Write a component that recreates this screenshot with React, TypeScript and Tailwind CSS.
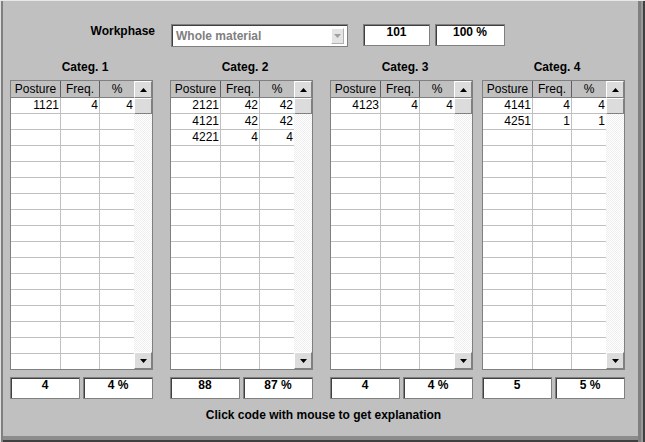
import React from 'react';

type Row = [number, number, number];

const categories: { title: string; rows: Row[]; total: number; pct: string; ml: string }[] = [
  { title: 'Categ. 1', rows: [[1121, 4, 4]], total: 4, pct: '4 %', ml: 'ml-[7px]' },
  {
    title: 'Categ. 2',
    rows: [
      [2121, 42, 42],
      [4121, 42, 42],
      [4221, 4, 4]
    ],
    total: 88,
    pct: '87 %',
    ml: 'ml-[17px]'
  },
  { title: 'Categ. 3', rows: [[4123, 4, 4]], total: 4, pct: '4 %', ml: 'ml-[17px]' },
  {
    title: 'Categ. 4',
    rows: [
      [4141, 4, 4],
      [4251, 1, 1]
    ],
    total: 5,
    pct: '5 %',
    ml: 'ml-[9px]'
  }
];

const ROW_COUNT = 17;

const Arrow = ({ up, color = '#000' }: { up?: boolean; color?: string }) => (
  <svg width="7" height="4" viewBox="0 0 7 4">
    {up ? <polygon points="3.5,0 7,4 0,4" fill={color} /> : <polygon points="0,0 7,0 3.5,4" fill={color} />}
  </svg>
);

const ScrollButton = ({ up }: { up?: boolean }) => (
  <div className="h-[17px] w-full bg-[#dcdcdc] border border-t-white border-l-white border-r-[#808080] border-b-[#808080] flex items-center justify-center">
    <Arrow up={up} />
  </div>
);

const PostureTable = ({ rows }: { rows: Row[] }) => {
  const lines = Array.from({ length: ROW_COUNT }, (_, i) => rows[i]);
  return (
    <div className="w-[143px] h-[290px] border border-[#808080] flex overflow-hidden bg-white">
      {/* grid */}
      <div className="w-[123px] flex flex-col">
        <div className="flex h-[17px] shrink-0 bg-[#c0c0c0] border-b border-[#808080] leading-[16px]">
          <div className="w-[50px] border-r border-[#606060] text-center">Posture</div>
          <div className="w-[39px] border-r border-[#606060] text-center">Freq.</div>
          <div className="w-[34px] text-center">%</div>
        </div>
        {lines.map((r, i) => (
          <div key={i} className="flex h-[16px] shrink-0 border-b border-[#c0c0c0] leading-[15px]">
            <div className="w-[50px] border-r border-[#c0c0c0] text-right pr-[1px]">{r ? r[0] : ''}</div>
            <div className="w-[39px] border-r border-[#c0c0c0] text-right pr-[1px]">{r ? r[1] : ''}</div>
            <div className="w-[34px] text-right pr-[1px]">{r ? r[2] : ''}</div>
          </div>
        ))}
      </div>
      {/* scrollbar */}
      <div className="w-[18px] flex flex-col">
        <ScrollButton up />
        <div className="h-[16px] bg-[#dcdcdc] border border-t-white border-l-white border-r-[#808080] border-b-[#808080]" />
        <div className="flex-1 bg-[repeating-conic-gradient(#ffffff_0_25%,#eeeeee_0_50%)] bg-[length:2px_2px]" />
        <ScrollButton />
      </div>
    </div>
  );
};

const ValueBox = ({ children, w }: { children: React.ReactNode; w: string }) => (
  <div className={`${w} h-[22px] bg-white border border-[#808080] shadow-[inset_1px_1px_0_#404040] text-center font-bold leading-[13px] pt-[1px]`}>
    {children}
  </div>
);

export default function App() {
  return (
    <div className="w-[645px] h-[442px] bg-[#c0c0c0] overflow-hidden font-['Liberation_Sans',Arial,sans-serif] text-[12px] text-black pl-[3px] pr-[7px] pt-[1px] pb-[6px] shadow-[inset_0_1px_0_#e8e8e8,inset_1px_0_0_#dfdfdf,inset_3px_0_0_#808080,inset_-2px_0_0_#404040,inset_-4px_0_0_#9a9a9a,inset_-7px_0_0_#808080,inset_0_-2px_0_#404040,inset_0_-6px_0_#8c8c8c]">
      {/* Workphase row */}
      <div className="flex items-start mt-[23px]">
        <div className="w-[152px] text-right font-bold leading-[14px]">Workphase</div>
        <div className="ml-[16px] w-[177px] h-[23px] bg-white border border-[#808080] shadow-[inset_1px_1px_0_#404040] flex items-start">
          <span className="pl-[4px] pt-[4px] leading-[14px] font-bold text-[#808080]">Whole material</span>
          <div className="ml-auto mr-[3px] mt-[3px] w-[13px] h-[16px] bg-[#e4e4e4] border border-t-white border-l-white border-r-[#b0b0b0] border-b-[#b0b0b0] flex items-center justify-center">
            <Arrow color="#a0a0a0" />
          </div>
        </div>
        <ValueBox w="ml-[15px] w-[67px]">101</ValueBox>
        <ValueBox w="ml-[5px] w-[70px]">100 %</ValueBox>
      </div>

      {/* Categories */}
      <div className="flex mt-[13px]">
        {categories.map(c => (
          <div key={c.title} className={`${c.ml} w-[143px] flex flex-col`}>
            <div className="h-[14px] leading-[14px] text-center font-bold pl-[7px]">{c.title}</div>
            <div className="mt-[6px]">
              <PostureTable rows={c.rows} />
            </div>
            <div className="flex gap-[3px] mt-[7px]">
              <ValueBox w="w-[70px]">{c.total}</ValueBox>
              <ValueBox w="w-[70px]">{c.pct}</ValueBox>
            </div>
          </div>
        ))}
      </div>

      <div className="mt-[9px] text-center font-bold leading-[14px] pl-[6px]">Click code with mouse to get explanation</div>
    </div>
  );
}
